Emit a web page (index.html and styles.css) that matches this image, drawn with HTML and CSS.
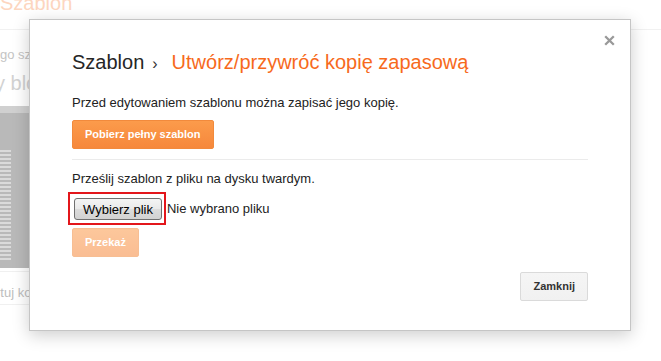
FILE: index.html
```html
<!DOCTYPE html>
<html>
<head>
    <title>Szablon - kopia zapasowa</title>
    <link rel="stylesheet" href="styles.css">
</head>
<body>
    <div class="page">
        <header class="page-head">
            <h2 class="page-title">Szablon</h2>
        </header>
        <div class="page-main">
            <p class="side-note">go szablonu</p>
            <p class="side-big">y blogu</p>
            <div class="thumb">
                <div class="thumb-bar"></div>
                <div class="thumb-body">
                    <div class="thumb-lines"></div>
                </div>
            </div>
            <div class="side-btn">rtuj kopię</div>
        </div>
        <div class="page-foot">
            <span class="foot-btn">
                <svg width="14" height="5" viewBox="0 0 14 5"><path d="M0 0h14v2H8v3H6V2H0z" fill="#d2d2d2"/></svg>
            </span>
        </div>
    </div>

    <div class="dialog">
        <button class="close" title="Zamknij">
            <svg width="11" height="11" viewBox="0 0 11 11"><path d="M1.2 1.2l8.6 8.6M9.8 1.2l-8.6 8.6" stroke="#999" stroke-width="2.3"/></svg>
        </button>

        <h1 class="title">
            <span class="crumb">Szablon</span><span class="sep">›</span><span class="current">Utwórz/przywróć kopię zapasową</span>
        </h1>

        <p class="text text-first">Przed edytowaniem szablonu można zapisać jego kopię.</p>
        <button class="btn btn-action">Pobierz pełny szablon</button>

        <div class="divider"></div>

        <p class="text">Prześlij szablon z pliku na dysku twardym.</p>
        <div class="file-row">
            <span class="mark"><button class="file-btn">Wybierz plik</button></span>
            <span class="file-name">Nie wybrano pliku</span>
        </div>
        <button class="btn btn-action btn-disabled" disabled>Przekaż</button>

        <div class="footer">
            <button class="btn btn-plain">Zamknij</button>
        </div>
    </div>
</body>
</html>
```

FILE: styles.css
```css
body {
    margin: 0;
    height: 361px;
    overflow: hidden;
    position: relative;
    background: #fff;
    font-family: "Liberation Sans", Arial, sans-serif;
    font-size: 13px;
}

/* page behind the dialog, faded */
.page-head {
    height: 38px;
    border-bottom: 1px solid #f1f1f1;
}
.page-title {
    margin: -9px 0 0 0;
    font-size: 20px;
    line-height: 24px;
    font-weight: normal;
    color: #fdd6bf;
}
.side-note {
    margin: 17px 0 0 0;
    line-height: 16px;
    color: #c4c4c4;
}
.side-big {
    margin: 8px 0 0 0;
    font-size: 20px;
    line-height: 24px;
    color: #d2d2d2;
    text-indent: -5px;
}
.thumb {
    width: 60px;
    height: 162px;
    margin-top: 11px;
    background: #b9b9b9;
    display: flex;
    flex-direction: column;
}
.thumb-bar {
    height: 7px;
    background: #d0d0d0;
}
.thumb-body {
    flex: 1;
    padding-top: 37px;
}
.thumb-lines {
    width: 11px;
    height: 110px;
    background: repeating-linear-gradient(to bottom, #dadada 0, #dadada 2px, transparent 2px, transparent 4px);
}
.side-btn {
    width: 60px;
    height: 19px;
    margin-top: 3px;
    padding-top: 13px;
    line-height: 16px;
    border-top: 1px solid #f0f0f0;
    border-bottom: 1px solid #f0f0f0;
    color: #bdbdbd;
    text-indent: -4px;
    white-space: nowrap;
}
.page-foot {
    padding-left: 190px;
    margin-top: 6px;
}
.foot-btn {
    display: flex;
    justify-content: center;
    align-items: flex-end;
    width: 39px;
    height: 19px;
    padding-bottom: 2px;
    box-sizing: border-box;
    border: 1px solid #eeeeee;
    border-radius: 2px;
    background: #fafafa;
}

/* dialog */
.dialog {
    position: absolute;
    left: 29px;
    top: 19px;
    width: 516px;
    padding: 30px 42px 29px;
    background: #fff;
    border: 1px solid #c5c5c5;
    box-shadow: 0 4px 16px rgba(0, 0, 0, 0.2);
    color: #222;
}
.close {
    position: absolute;
    top: 15px;
    right: 15px;
    width: 11px;
    height: 11px;
    padding: 0;
    border: none;
    background: none;
    display: flex;
}
.title {
    margin: 0;
    height: 24px;
    font-size: 20px;
    line-height: 24px;
    font-weight: normal;
    white-space: nowrap;
}
.crumb {
    color: #262626;
}
.sep {
    font-size: 16px;
    line-height: 1;
    margin: 0 14px 0 8px;
    color: #333;
}
.current {
    color: #f76a1c;
}
.text {
    margin: 11px 0 0 0;
    line-height: 16px;
}
.text-first {
    margin-top: 21px;
}
.btn {
    display: block;
    height: 29px;
    padding: 0 12px;
    border: 1px solid;
    border-radius: 2px;
    font-family: "Liberation Sans", Arial, sans-serif;
    font-size: 11px;
    font-weight: bold;
    line-height: 27px;
}
.btn-action {
    margin-top: 9px;
    background: linear-gradient(#fc9b4b, #f6883c);
    border-color: #f28a3c;
    color: #fff;
}
.btn-disabled {
    margin-top: 8px;
    opacity: 0.55;
}
.btn-plain {
    display: inline-block;
    background: linear-gradient(#f5f5f5, #f1f1f1);
    border-color: #dadada;
    color: #333;
}
.divider {
    height: 1px;
    margin-top: 10px;
    background: #ebebeb;
}
.file-row {
    display: flex;
    align-items: center;
    height: 22px;
    margin-top: 11px;
}
.mark {
    display: inline-block;
    margin: -6px 0 -5px -4px;
    padding: 4px 2px 3px 4px;
    border: 2px solid #e3161b;
}
.file-btn {
    display: block;
    height: 22px;
    padding: 0 8px;
    border: 1px solid #707070;
    border-radius: 3px;
    background: linear-gradient(#f4f4f4, #e9e9e9 50%, #dcdcdc 51%, #d2d2d2);
    font-family: "Liberation Sans", Arial, sans-serif;
    font-size: 13px;
    color: #000;
}
.file-name {
    margin-left: 1px;
    line-height: 16px;
    color: #222;
}
.footer {
    margin-top: 15px;
    text-align: right;
}
```
